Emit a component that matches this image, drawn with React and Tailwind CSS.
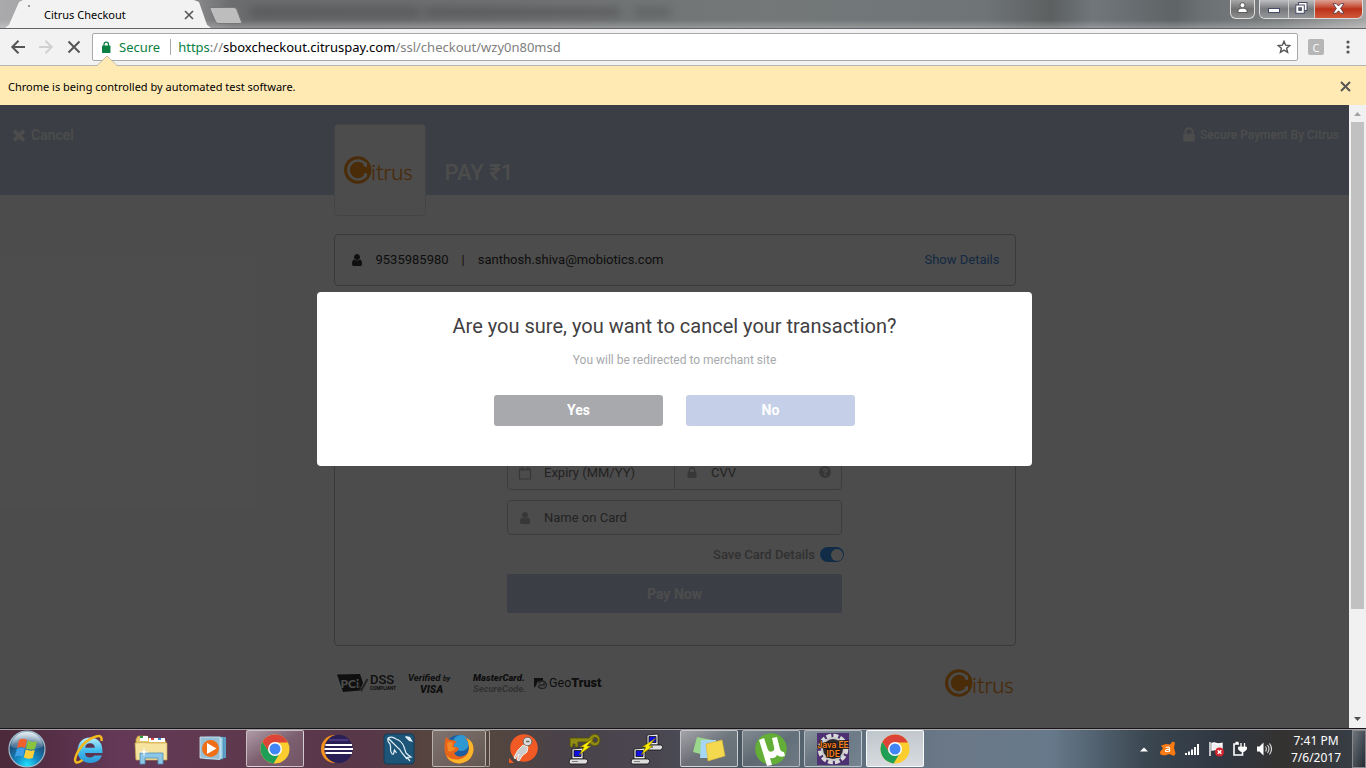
import React from "react";

const FA_TIMES =
  "M1490 1322q0 40-28 68l-136 136q-28 28-68 28t-68-28l-294-294-294 294q-28 28-68 28t-68-28l-136-136q-28-28-28-68t28-68l294-294-294-294q-28-28-28-68t28-68l136-136q28-28 68-28t68 28l294 294 294-294q28-28 68-28t68 28l136 136q28 28 28 68t-28 68l-294 294 294 294q28 28 28 68z";
const FA_LOCK =
  "M640 768h512v-192q0-106-75-181t-181-75-181 75-75 181v192zm832 96v576q0 40-28 68t-68 28h-960q-40 0-68-28t-28-68v-576q0-40 28-68t68-28h32v-192q0-184 132-316t316-132 316 132 132 316v192h32q40 0 68 28t28 68z";
const FA_USER =
  "M1536 1399q0 109-62.5 187t-150.5 78h-854q-88 0-150.5-78t-62.5-187q0-85 8.5-160.5t31.5-152 58.5-131 94-89 134.5-34.5q131 128 313 128t313-128q76 0 134.5 34.5t94 89 58.5 131 31.5 152 8.5 160.5zm-256-887q0 159-112.5 271.5t-271.5 112.5-271.5-112.5-112.5-271.5 112.5-271.5 271.5-112.5 271.5 112.5 112.5 271.5z";

function Glyph({ d, className }) {
  return (
    <svg viewBox="0 0 1792 1792" className={className} fill="currentColor" aria-hidden="true">
      <path d={d} />
    </svg>
  );
}

function CitrusLogo() {
  return (
    <svg width="71" height="28" viewBox="0 0 71 28" role="img" aria-label="Citrus" className="shrink-0">
      <circle cx="13.7" cy="14" r="13.7" fill="#f7941d" />
      <path d="M21.500 8.200A9.500 9.500 0 1 0 21.500 19.800" fill="none" stroke="#fff" strokeWidth="2.500" />
      <path d="M19.200 9.500L23 6v5.200L20.800 10.500zM19.200 18.500L23 22v-5.200L20.800 17.500z" fill="#fff" />
      <text x="27" y="24" fontSize="22" fontWeight="300" fill="#f58a14" stroke="#f58a14" strokeWidth=".3" fontFamily="Lato, sans-serif">itrus</text>
    </svg>
  );
}

/* ---------- browser window ---------- */

function TitleBar() {
  return (
    <div className="relative flex h-[29px] shrink-0 items-start justify-between overflow-hidden border-b border-[#66636a] bg-[linear-gradient(90deg,#aaaaac_0%,#8d8d8f_14%,#6b6c6e_17%,#6e6f71_35%,#747879_56%,#6f7476_72%,#5d6061_77%,#70767a_80%,#5f6466_86%,#6b7072_88%,#7d8081_94%,#a5a5a5_100%)]">
      <div className="absolute inset-x-0 bottom-0 h-2 bg-linear-to-t from-white/25 to-transparent" />
      <div className="absolute top-1.5 left-[250px] h-3 w-[170px] bg-black/15 blur-xs" />
      <div className="absolute top-2 left-[425px] h-2 w-[195px] bg-black/20 blur-xs" />
      <div className="absolute top-2 left-[634px] h-2 w-9 bg-black/15 blur-xs" />

      <div className="relative flex items-start">
        <div className="ml-[5px] flex h-[28px] w-[206px] items-center bg-[#f2f2f2] pr-[17px] pl-[22px] [clip-path:polygon(0_100%,4px_88%,14px_2px,18px_0,189px_0,194px_2px,202px_88%,100%_100%)]">
          <span className="mb-4 ml-px h-0.5 w-0.5 bg-[#999]" />
          <span className="ml-3.5 flex-1 pt-0.5 font-['Noto_Sans','Open_Sans',sans-serif] text-[11px] leading-4 text-black">Citrus Checkout</span>
          <button aria-label="Close tab" className="flex pt-px">
            <svg width="10" height="10" viewBox="0 0 10 10" stroke="#555" strokeWidth="1.6"><path d="M1 1l8 8M9 1L1 9" /></svg>
          </button>
        </div>
        <button aria-label="New tab" className="-ml-0.5 flex">
          <svg width="34" height="29" viewBox="0 0 34 29">
            <path d="M2 7.500H25q2 0 2.800 2l4.600 12q.7 2-1 2H9.500q-2.200 0-3-2L1 9Q.5 7.500 2 7.500z" fill="#bdbdbe" stroke="#77777a" />
          </svg>
        </button>
      </div>

      <div className="relative mr-[3px] flex gap-1">
        <button aria-label="User" className="flex h-[19px] w-[25px] items-center justify-center rounded-b-md border border-t-0 border-[#ddd] bg-linear-to-b from-[#a8a8a8] via-[#707070] to-[#8d8d8d] pb-1">
          <svg width="11" height="11" viewBox="0 0 11 11" fill="#fff" stroke="#444" strokeWidth=".8">
            <path d="M1 10.500V8.500Q1.500 6.500 4 6.200H7Q9.500 6.500 10 8.500V10.500z" /><circle cx="5.500" cy="3.200" r="2.500" />
          </svg>
        </button>
        <div className="flex h-[19px] overflow-hidden rounded-b-md border border-t-0 border-[#ddd]">
          <button aria-label="Minimize" className="flex w-7 items-center justify-center bg-linear-to-b from-[#bfbfc2] via-[#77797d] to-[#96979a] pt-0.5">
            <svg width="12" height="5" viewBox="0 0 12 5"><rect x=".5" y=".5" width="11" height="4" fill="#fff" stroke="#484b66" /></svg>
          </button>
          <button aria-label="Restore" className="flex w-[27px] items-center justify-center border-x border-[#ccc] bg-linear-to-b from-[#bfbfc2] via-[#77797d] to-[#96979a] pb-0.5">
            <svg width="13" height="12" viewBox="0 0 13 12" fill="#fff" stroke="#484b66">
              <rect x="3.500" y=".5" width="8.500" height="8" /><rect x=".8" y="3" width="8.500" height="8.300" /><rect x="3.800" y="5.800" width="2.600" height="2.600" fill="#666" />
            </svg>
          </button>
          <button aria-label="Close" className="flex w-[47px] items-center justify-center bg-linear-to-b from-[#dda193] via-[#bc3018] to-[#d0593a] pb-0.5">
            <svg width="13" height="11" viewBox="0 0 13 11"><path d="M1 .7H4.300L6.500 3 8.700.7H12L8.600 5.400 12 10.200H8.700L6.500 7.800 4.300 10.200H1L4.400 5.400z" fill="#fff" stroke="#5b3a48" strokeWidth=".9" /></svg>
          </button>
        </div>
      </div>
    </div>
  );
}

function Toolbar() {
  return (
    <div className="relative flex h-[37px] shrink-0 items-center border-b border-[#b5b5b5] bg-[#f2f2f2] pr-3 pl-2.5">
      <button aria-label="Back" className="flex">
        <svg width="16" height="16" viewBox="0 0 16 16" fill="none" stroke="#555" strokeWidth="2"><path d="M15 8H2.500M8.500 1.800L2.300 8l6.200 6.200" /></svg>
      </button>
      <button aria-label="Forward" className="ml-3 flex">
        <svg width="16" height="16" viewBox="0 0 16 16" fill="none" stroke="#d0d0d0" strokeWidth="2"><path d="M1 8h12.500M7.500 1.800L13.700 8l-6.200 6.200" /></svg>
      </button>
      <button aria-label="Stop" className="ml-3 flex">
        <svg width="16" height="16" viewBox="0 0 16 16" stroke="#555" strokeWidth="2"><path d="M2.500 2.500l11 11M13.500 2.500l-11 11" /></svg>
      </button>
      <div className="ml-2.5 flex h-7 min-w-0 flex-1 items-center rounded-xs border border-[#a9a9a9] bg-white pr-1.5 pl-[9px] font-['Noto_Sans','Open_Sans',sans-serif] text-[13px] leading-5">
        <svg width="9" height="13" viewBox="0 0 9 13" className="shrink-0">
          <rect y="4.500" width="8.500" height="7.500" rx=".8" fill="#0b8043" /><path d="M2 5V3.300a2.250 2.250 0 0 1 4.500 0V5" fill="none" stroke="#0b8043" strokeWidth="1.300" />
        </svg>
        <span className="ml-2 text-[#0b8043]">Secure</span>
        <span className="ml-2.5 h-4 w-px bg-[#aaa]" />
        <span className="ml-[7px] flex-1 truncate text-[#808080]">
          <span className="text-[#0b8043]">https</span>://<span className="text-black">sboxcheckout.citruspay.com</span>/ssl/checkout/wzy0n80msd
        </span>
        <button aria-label="Bookmark this page" className="flex">
          <svg width="14" height="14" viewBox="0 0 14 14" fill="none" stroke="#555" strokeWidth="1.400"><path d="M7 1.300l1.600 3.900 4.200.3-3.200 2.700 1 4.100L7 10.100l-3.600 2.200 1-4.100L1.200 5.500l4.200-.3z" /></svg>
        </button>
      </div>
      <button aria-label="Extension" className="ml-2.5 flex h-4 w-4 items-center justify-center rounded-xs bg-[#b6b6b6] font-['Open_Sans',sans-serif] text-[11px] leading-none text-white">C</button>
      <button aria-label="Menu" className="ml-[18px] flex w-3 justify-center">
        <svg width="4" height="14" viewBox="0 0 4 14" fill="#555"><circle cx="2" cy="2" r="1.600" /><circle cx="2" cy="7" r="1.600" /><circle cx="2" cy="12" r="1.600" /></svg>
      </button>
      <svg width="20" height="10" viewBox="0 0 20 10" className="absolute -bottom-px left-[97px]" aria-hidden="true">
        <path d="M0 10L10 0l10 10z" fill="#ffeab4" /><path d="M0 9.500L10 0l10 9.500" fill="none" stroke="#c5bda5" />
      </svg>
    </div>
  );
}

function InfoBar() {
  return (
    <div className="flex h-[39px] shrink-0 items-center justify-between bg-[#ffeab4] px-2 pt-0.5 font-['Noto_Sans','Open_Sans',sans-serif] text-[11px] leading-4 text-black">
      <span>Chrome is being controlled by automated test software.</span>
      <button aria-label="Dismiss" className="mr-[7px] flex">
        <svg width="11" height="11" viewBox="0 0 11 11" stroke="#555" strokeWidth="2"><path d="M1 1l9 9M10 1l-9 9" /></svg>
      </button>
    </div>
  );
}

function ScrollBar() {
  return (
    <div className="flex w-[17px] shrink-0 flex-col items-center bg-[#f1f1f1]" aria-hidden="true">
      <svg width="17" height="17" viewBox="0 0 17 17"><path d="M5 11l3.500-4L12 11z" fill="#a3a3a3" /></svg>
      <div className="w-[13px] flex-487 bg-[#c1c1c1]" />
      <div className="flex-102" />
      <svg width="17" height="17" viewBox="0 0 17 17"><path d="M5 6h7L8.500 10z" fill="#505050" /></svg>
    </div>
  );
}

/* ---------- checkout page ---------- */

function CheckoutHeader() {
  return (
    <header className="grid h-[90px] grid-cols-[1fr_682px_1fr] bg-[#c5d0e8] font-medium text-white">
      <a href="#cancel" className="mt-5 ml-2.5 flex h-5 items-center gap-[3px] text-[14px] leading-5">
        <Glyph d={FA_TIMES} className="h-[18px] w-[18px]" />
        Cancel
      </a>
      <div className="flex items-start">
        <div className="mt-[19px] flex h-[92px] w-[92px] items-center justify-center rounded border border-[#e4e4e4] bg-white">
          <CitrusLogo />
        </div>
        <h1 className="mt-14 ml-[19px] text-[22px] leading-6 font-medium">PAY ₹1</h1>
      </div>
      <p className="mt-5 mr-2.5 flex h-5 items-center justify-end gap-0.5 text-[12px] leading-5">
        <Glyph d={FA_LOCK} className="h-[18px] w-[18px]" />
        Secure Payment By Citrus
      </p>
    </header>
  );
}

function ContactCard() {
  return (
    <section className="mt-[39px] flex h-[52px] items-center rounded border border-[#c0c0c0] px-[15px] text-[13px] leading-5 text-[#333]">
      <Glyph d={FA_USER} className="h-3.5 w-3.5" />
      <span className="ml-3">9535985980</span>
      <span className="mx-[13px] text-[#6b3333]">|</span>
      <span>santhosh.shiva@mobiotics.com</span>
      <a href="#details" className="ml-auto text-[#4488dd]">Show Details</a>
    </section>
  );
}

const inputClass = "h-full w-full bg-transparent pl-9 text-[13px] leading-5 text-[#333] outline-none placeholder:text-[#757575]";
const iconClass = "absolute top-2.5 left-2.5 h-3.5 w-3.5 text-[#b8b8b8]";

function CardForm() {
  return (
    <section className="mt-4 rounded border border-[#c0c0c0] pt-[152px] pb-8">
      <form className="mx-auto w-[335px]" onSubmit={(e) => e.preventDefault()}>
        <div className="flex h-[35px] rounded border border-[#ccc]">
          <div className="relative flex-1 border-r border-[#ccc]">
            <svg viewBox="0 0 14 14" className={iconClass} fill="none" stroke="currentColor"><path d="M1.500 3.500h11v9.500h-11z" strokeWidth="1.200" /><path d="M1 3.500h12M4 1v3M10 1v3" strokeWidth="2" /></svg>
            <input aria-label="Expiry" placeholder="Expiry (MM/YY)" className={inputClass} />
          </div>
          <div className="relative flex-1">
            <Glyph d={FA_LOCK} className={iconClass} />
            <input aria-label="CVV" placeholder="CVV" className={inputClass} />
            <svg viewBox="0 0 12 12" className="absolute top-2.5 right-2.5 h-3 w-3"><circle cx="6" cy="6" r="6" fill="#b8b8b8" /><path d="M4.200 4.700Q4.300 3 6 3t1.800 1.500Q7.800 5.400 6.100 6v1" fill="none" stroke="#fff" strokeWidth="1.400" /><rect x="5.300" y="8" width="1.600" height="1.500" fill="#fff" /></svg>
          </div>
        </div>
        <div className="relative mt-2.5 h-[35px] rounded border border-[#ccc]">
          <Glyph d={FA_USER} className={iconClass} />
          <input aria-label="Name on Card" placeholder="Name on Card" className={inputClass} />
        </div>
        <label className="-mr-0.5 flex h-[39px] items-center justify-end gap-[5px] text-[13px] leading-5 font-medium text-[#a5a5a5]">
          Save Card Details
          <input type="checkbox" defaultChecked className="peer sr-only" />
          <span className="flex h-[15px] w-6 items-center justify-end rounded-full bg-[#3a94ee] p-px"><span className="h-3 w-3 rounded-full bg-white" /></span>
        </label>
        <button className="h-[39px] w-full rounded-xs bg-[#c5d0e8] text-[14px] leading-5 font-bold text-white">Pay Now</button>
      </form>
    </section>
  );
}

function TrustBadges() {
  return (
    <footer className="mt-[23px] flex items-center justify-between pb-[31px]">
      <svg width="274" height="28" viewBox="0 0 274 28" role="img" aria-label="Security certifications" fill="#333" fontFamily="Roboto, sans-serif">
        <path d="M3 5.500L26 5l3 9-3 7.500L9 23z" />
        <text x="6.500" y="18.500" fontSize="12" fontWeight="900" fill="#fff" fontFamily="Lato, sans-serif">PCi</text>
        <path d="M24 15.500l3.500 5.500 6-11" fill="none" stroke="#777" strokeWidth="2" />
        <text x="36" y="14.500" fontSize="13" fontWeight="500">DSS</text>
        <text x="36" y="21" fontSize="4.600" fontWeight="700">COMPLIANT</text>
        <text x="74" y="11.500" fontSize="9.500" fontStyle="italic" fontWeight="700">Verified</text>
        <text x="109" y="11.500" fontSize="7" fontStyle="italic" fontWeight="700">by</text>
        <text x="86" y="23.500" fontSize="10.500" fontStyle="italic" fontWeight="900">VISA</text>
        <text x="139" y="12" fontSize="9.500" fontStyle="italic" fontWeight="900">MasterCard.</text>
        <text x="139" y="23" fontSize="9.500" fontStyle="italic" fontWeight="700" fill="#a8a8a8">SecureCode.</text>
        <path d="M200 9h9v3h-4q-2.500 1-2.500 4l-2.500 3z" />
        <path d="M204.500 14.500q1-2.500 4-2.500t4 4q-.5 3.500-4.500 3.500-3 0-4-3M205 16h5v-2.500" fill="none" stroke="#777" strokeWidth="1.500" />
        <text x="215" y="18" fontSize="12.500">Geo<tspan fontWeight="900">Trust</tspan><tspan fontSize="6">·</tspan></text>
      </svg>
      <CitrusLogo />
    </footer>
  );
}

function CancelDialog() {
  return (
    <div className="absolute inset-0 flex items-start justify-center bg-black/70 pt-[187px]">
      <div role="dialog" aria-modal="true" aria-labelledby="cancel-title" className="w-[715px] rounded bg-white pt-5 pb-10 text-center">
        <h2 id="cancel-title" className="text-[20px] leading-7 text-[#414042]">Are you sure, you want to cancel your transaction?</h2>
        <p className="mt-3 text-[12px] leading-4 text-[#a7a9ac]">You will be redirected to merchant site</p>
        <div className="mt-[27px] flex justify-center gap-[23px] text-[14px] leading-5 font-bold text-white">
          <button className="h-[31px] w-[169px] rounded-[3px] bg-[#a7a9ac] pb-px">Yes</button>
          <button className="h-[31px] w-[169px] rounded-[3px] bg-[#c5d0e8] pb-px">No</button>
        </div>
      </div>
    </div>
  );
}

/* ---------- taskbar icons ---------- */

function StartOrb() {
  return (
    <svg width="38" height="38" viewBox="0 0 38 38">
      <defs>
        <radialGradient id="orb" cx=".5" cy=".95" r=".9"><stop offset="0" stopColor="#22e4ff" /><stop offset=".35" stopColor="#1489c4" /><stop offset=".75" stopColor="#1d4d78" /><stop offset="1" stopColor="#8fb0c4" /></radialGradient>
        <linearGradient id="orbTop" x2="0" y2="1"><stop offset="0" stopColor="#fff" stopOpacity=".75" /><stop offset="1" stopColor="#fff" stopOpacity=".1" /></linearGradient>
      </defs>
      <circle cx="19" cy="19" r="18" fill="url(#orb)" stroke="#a3bccb" strokeWidth="1.200" />
      <path d="M3 17a16 15 0 0 1 32 0q-16 5-32 0z" fill="url(#orbTop)" />
      <path d="M11 10q4-2.500 8 0l-2 8q-4-2-8 0z" fill="#f0602c" />
      <path d="M20 10.500q4 2.500 9 .5l-2 8q-4 1.500-9-.500z" fill="#8ac43c" />
      <path d="M8.800 19q4-2 8 0l-2 8q-4-2.500-8 0z" fill="#3fa0e8" />
      <path d="M17.800 19.500q4.500 2 9 .5l-2 8q-5 1.500-9-.5z" fill="#ffcf3c" />
    </svg>
  );
}

function ExplorerE() {
  return (
    <svg width="32" height="32" viewBox="0 0 32 32">
      <defs><linearGradient id="ie" x2="0" y2="1"><stop offset="0" stopColor="#b8eeff" /><stop offset=".5" stopColor="#43bdf0" /><stop offset="1" stopColor="#2a96d6" /></linearGradient></defs>
      <path fillRule="evenodd" d="M29.500 20H12q.3 4.500 5 4.500 3 0 4.300-2h7.700Q26 30 17.500 30 5 29.500 4.500 17.500 5.500 5 17 4.500 30 5 29.500 20zM12.200 14.800h9.600Q21.500 10.500 17 10.300q-4.500.2-4.800 4.500z" fill="url(#ie)" />
      <path d="M28.500 8Q29.500 1.500 23 3.500 12 6.500 5 18.500 0 28 3.500 29.500 5.500 30 9.500 27" fill="none" stroke="#f2b91e" strokeWidth="2.500" />
    </svg>
  );
}

function FolderIcon() {
  return (
    <svg width="34" height="32" viewBox="0 0 34 32">
      <path d="M2 6l2-3h9l2 3h15l2 3v17H2z" fill="#e7c868" stroke="#b89a44" strokeWidth=".7" />
      <path d="M6 3h8v5H6zM15 5h8v4h-8zM23 5h8v4h-8z" fill="#fff" />
      <path d="M6 3h3v2H6z" fill="#2d9a3c" /><path d="M17 5h3v2h-3z" fill="#d84040" /><path d="M24 5h3v2h-3z" fill="#3a8bd0" />
      <path d="M1 10q8-1 14 0h18v17H2z" fill="#f6e3a0" stroke="#c9a850" strokeWidth=".7" />
      <path d="M6 31V20h23v11h-5v-6H11v6z" fill="#8ec7e6" stroke="#4d8fb8" strokeWidth=".8" />
      <path d="M10 14l.8 4.200 4.200.8-4.200.8L10 24l-.8-4.200L5 19l4.200-.8z" fill="#fff" />
    </svg>
  );
}

function MediaPlayerIcon() {
  return (
    <svg width="30" height="30" viewBox="0 0 30 30">
      <path d="M10 3h18v21H10z" fill="#5d9fc6" /><path d="M7 3h18v22H7z" fill="#a4d4ea" stroke="#4689b0" strokeWidth=".7" />
      <path d="M2 3h20v22.500L2 24z" fill="#96bfd6" stroke="#d5e9f3" strokeWidth=".8" />
      <circle cx="12.500" cy="14.500" r="8.500" fill="#ee6f17" /><path d="M9 9v11l9.500-5.500z" fill="#fff" />
    </svg>
  );
}

function ChromeIcon() {
  return (
    <svg width="30" height="30" viewBox="0 0 30 30">
      <circle cx="15" cy="15" r="14.500" fill="#fccd2e" />
      <path d="M15 .5A14.500 14.500 0 0 1 27.900 8.500H15L9 18 2.300 8Q6.500.8 15 .5z" fill="#dc4437" />
      <path d="M2.300 8A14.500 14.500 0 0 0 13.600 29.400L20.500 18 15 21 9.300 18.200z" fill="#1f9e58" />
      <circle cx="15" cy="15" r="7" fill="#fff" /><circle cx="15" cy="15" r="5.500" fill="#4285f4" />
    </svg>
  );
}

function EclipseIcon() {
  return (
    <svg width="34" height="30" viewBox="0 0 34 30">
      <circle cx="15" cy="15" r="14" fill="#f4921e" /><circle cx="18.500" cy="15" r="14.200" fill="#2b2056" />
      <path d="M5.500 11h26.500M4.500 15H33M5.500 19h26.500" stroke="#fff" strokeWidth="2" />
      <path d="M9 6h19" stroke="#49397c" strokeWidth="2" />
    </svg>
  );
}

function MySqlIcon() {
  return (
    <svg width="32" height="32" viewBox="0 0 32 32">
      <rect x="1" y="1" width="30" height="30" rx="3" fill="#1c5578" stroke="#123c58" />
      <path d="M5 5q4-2 8 1 6 2 8 8l2 6q2 2 5 4l-4 .5 3 3.500M5 5q-1 3 2 6 1 3 .5 6 1 5 3 4l1-4 2 3M5 5q4 4 9 9 3 2 5 6l5 6" fill="none" stroke="#e1eef5" strokeWidth="1.200" />
      <path d="M22 4l4 4 4 1-3-5-4-1z" fill="#e1eef5" />
    </svg>
  );
}

function FirefoxIcon() {
  return (
    <svg width="32" height="32" viewBox="0 0 32 32">
      <circle cx="16" cy="16" r="14" fill="#1d5f9e" /><circle cx="18" cy="10" r="8" fill="#2e98d2" />
      <path d="M3 4q2 3 5 3 4 0 6 2-4 2-3 5 3-1 5 2-2 3-5 4 3 5 9 3 6-2 6-9 0-6-5-10 9 3 9.500 12Q30 28 17 30.500 2 30 1.500 16 1.500 8 3 4z" fill="#e8641b" />
      <path d="M24 5q7 4 6.500 12Q29 29 16 30.500 7 30 3 22q6 6 14 4 8-2 9-10 0-6-2-11z" fill="#fbb52a" />
      <path d="M4 10q3-2 6 0l-1 4 4 1q-4 5-8 3z" fill="#f58a24" />
    </svg>
  );
}

function PostmanIcon() {
  return (
    <svg width="30" height="32" viewBox="0 0 30 32">
      <circle cx="16" cy="15" r="13.800" fill="#f15a24" /><path d="M1 25l5 5H1z" fill="#f15a24" />
      <circle cx="19.500" cy="8.500" r="4.300" fill="#ddd" stroke="#666" /><path d="M18 8.500h3.500" stroke="#666" strokeWidth="1.500" />
      <path d="M15 12l5 2-1 5-5 4-3 5-2-1 2-6-4 5-1-2 4-7z" fill="#ccc" stroke="#fff" strokeWidth=".8" />
    </svg>
  );
}

function Computer({ x, y }) {
  return (
    <g transform={`translate(${x} ${y})`} stroke="#111" strokeWidth=".8">
      <path d="M3 1l11-1v11H3z" fill="#e8e8e8" /><path d="M5 2.500h7v6H5z" fill="#1010e0" />
      <path d="M1 11h16l2 2-2 3H1l-1-2z" fill="#ddd" /><path d="M3 13.500h6" stroke="#666" />
    </g>
  );
}

function PuttyIcon({ keyed = false }) {
  return (
    <svg width="34" height="32" viewBox="0 0 34 32">
      {keyed ? (
        <path fillRule="evenodd" d="M2 5h19q2-4 6-4 5 1 5 6t-5 6q-4 0-6-4H10v5H7v-3H5v3H2zM27 4.500a2.500 2.500 0 1 0 .1 0z" fill="#908b13" stroke="#4f4c0a" strokeWidth=".8" />
      ) : (
        <Computer x={14} y={1} />
      )}
      <Computer x={1} y={15} />
      <path d="M26 5L12 14h4l-5 8 12-9h-4z" fill="#ffee00" stroke="#665c00" strokeWidth=".6" />
    </svg>
  );
}

function NotesIcon() {
  return (
    <svg width="34" height="30" viewBox="0 0 34 30">
      <path d="M5 3l15 3-4 16L1 18z" fill="#9bd88b" /><path d="M9 6h15v18H8z" fill="#a5d6f4" />
      <path d="M14 10l16-4 3 16-17 5z" fill="#f4d94f" stroke="#d6b93b" strokeWidth=".6" />
    </svg>
  );
}

function TorrentIcon() {
  return (
    <svg width="34" height="34" viewBox="0 0 34 34">
      <circle cx="17" cy="17" r="15.800" fill="#62ae36" />
      <path d="M5 8l5-2 4 12q2 3 5 1 2-1 1-4l-2-9 5-1 3 12q1 3 4 3l1 4q-5 2-8-1-2 4-7 3l2 7-5 1z" fill="#fff" />
    </svg>
  );
}

function JavaEeIcon() {
  return (
    <svg width="32" height="32" viewBox="0 0 32 32">
      <rect width="32" height="32" fill="#4e3172" />
      <circle cx="16" cy="16" r="12.800" fill="none" stroke="#d9d9d9" strokeWidth="5" strokeDasharray="4.700 2" />
      <circle cx="16" cy="16" r="11" fill="#2d2730" stroke="#c9c9c9" strokeWidth="2" />
      <g fontFamily="Roboto, sans-serif" fontSize="9" fontWeight="500" fill="#ff8421" stroke="#1b120c" strokeWidth="1.500" paintOrder="stroke" textAnchor="middle"><text x="16" y="15">Java EE</text><text x="16" y="24">IDE</text></g>
    </svg>
  );
}

const TASKS = [
  { name: "Internet Explorer", icon: <ExplorerE /> },
  { name: "Windows Explorer", icon: <FolderIcon /> },
  { name: "Media Player", icon: <MediaPlayerIcon /> },
  { name: "Chrome", icon: <ChromeIcon />, state: "open" },
  { name: "Eclipse", icon: <EclipseIcon /> },
  { name: "MySQL Workbench", icon: <MySqlIcon /> },
  { name: "Firefox", icon: <FirefoxIcon />, state: "stack" },
  { name: "Postman", icon: <PostmanIcon /> },
  { name: "PuTTYgen", icon: <PuttyIcon keyed /> },
  { name: "PuTTY", icon: <PuttyIcon /> },
  { name: "Sticky Notes", icon: <NotesIcon />, state: "open" },
  { name: "uTorrent", icon: <TorrentIcon />, state: "dim" },
  { name: "Eclipse Java EE", icon: <JavaEeIcon />, state: "dim" },
  { name: "Chrome window", icon: <ChromeIcon />, state: "active" },
];

const TASK_STATE = {
  open: "border-white/60 bg-linear-to-br from-white/50 via-white/20 to-white/15",
  dim: "border-white/50 bg-linear-to-br from-white/30 via-white/10 to-white/15",
  stack: "border-white/50 bg-linear-to-br from-white/25 to-white/10",
  active: "border-white/90 bg-linear-to-b from-white/60 to-white/75",
};

function Taskbar() {
  return (
    <nav aria-label="Taskbar" className="flex h-10 shrink-0 border-t border-[#17151a] bg-[linear-gradient(90deg,#4b2939_0%,#653858_9%,#60394f_15%,#573748_27%,#55443f_31%,#54463f_36%,#494249_41%,#4a4650_48%,#4a565f_54%,#607180_64%,#6b7887_70%,#66798a_77%,#3a4650_84%,#303843_89%,#343230_94%,#38404a_100%)]">
      <div className="flex flex-1 border-t border-[#a2a0a3]">
        <button aria-label="Start" className="flex w-[58px] items-center pl-2"><StartOrb /></button>
        {TASKS.map(({ name, icon, state }) => (
          <div key={name} className="flex w-[62px] px-0.5 pb-px">
            <button aria-label={name} className={`flex flex-1 items-center justify-center rounded-xs border ${TASK_STATE[state] ?? "border-transparent"}`}>{icon}</button>
            {state === "stack" && <span className="w-1 rounded-r-xs border border-l-0 border-white/50" />}
          </div>
        ))}

        <div className="ml-auto flex items-center gap-2 pr-3">
          <svg width="16" height="16" viewBox="0 0 16 16"><path d="M4 10.500l4-4 4 4z" fill="#fff" /></svg>
          <svg width="16" height="16" viewBox="0 0 16 16"><path d="M1 4.500l5-1.500 4 .5L12.500.5l2.500 1-1 5.500 1.500 5.500-1.500 2.500-4.500-2-5 1.500L.5 13.500 0 11l3-3.500z" fill="#ff7b12" /><path d="M5.700 6.500q3.500-1.300 3.800.8v3.500m0-2.300q-4-.5-4 1.200t4 .3" fill="none" stroke="#fff" strokeWidth="1.200" /></svg>
          <svg width="16" height="16" viewBox="0 0 16 16" fill="#fff"><path d="M1 12h2v2H1zM4 10.500h2V14H4zM7 8.500h2V14H7zM10 6h2v8h-2zM13 3h2v11h-2z" /></svg>
          <svg width="16" height="16" viewBox="0 0 16 16"><path d="M2 1v14M4 2.500q2-1 4 0t6 0v6.500q-3 1-5 0t-5 0z" stroke="#fff" strokeWidth="1.400" fill="#eee" /><circle cx="11.500" cy="11" r="4.500" fill="#d6242c" /><path d="M9.700 9.200l3.600 3.600m0-3.600l-3.600 3.600" stroke="#fff" strokeWidth="1.500" /></svg>
          <svg width="16" height="16" viewBox="0 0 16 16" fill="none" stroke="#fff" strokeWidth="1.600"><path d="M7 3H2v11h6M3.500 1.500h3" /><path d="M9 2v4M12.500 2v4" strokeWidth="1.300" /><path d="M6.500 6h8v2.500l-2.500 2H9l-2.500-2z" fill="#fff" strokeWidth=".8" /><path d="M10.500 10v4H8" /></svg>
          <svg width="16" height="16" viewBox="0 0 16 16"><path d="M1 5.500h2.500L7.500 1.500v13l-4-4H1z" fill="#fff" /><path d="M9.500 5.500q1.800 2.500 0 5M11.500 4q3 4 0 8M13.500 2.500q4 5.500 0 11" fill="none" stroke="#ddd" strokeWidth="1.100" /></svg>
        </div>
        <div className="flex w-[68px] flex-col items-center justify-center pr-1 pb-px text-center font-['Noto_Sans','Open_Sans',sans-serif] text-[12px] leading-[17px] text-white">
          <span>7:41 PM</span>
          <span>7/6/2017</span>
        </div>
        <button aria-label="Show desktop" className="w-3.5 border border-[#88898c] bg-linear-to-br from-[#6f767e] to-[#242b33]" />
      </div>
    </nav>
  );
}

export default function App() {
  return (
    <div className="flex min-h-screen flex-col font-['Roboto',sans-serif]">
      <TitleBar />
      <Toolbar />
      <InfoBar />
      <div className="flex flex-1">
        <main className="relative min-w-0 flex-1 bg-white">
          <CheckoutHeader />
          <div className="mx-auto w-[682px]">
            <ContactCard />
            <CardForm />
            <TrustBadges />
          </div>
          <CancelDialog />
        </main>
        <ScrollBar />
      </div>
      <Taskbar />
    </div>
  );
}
